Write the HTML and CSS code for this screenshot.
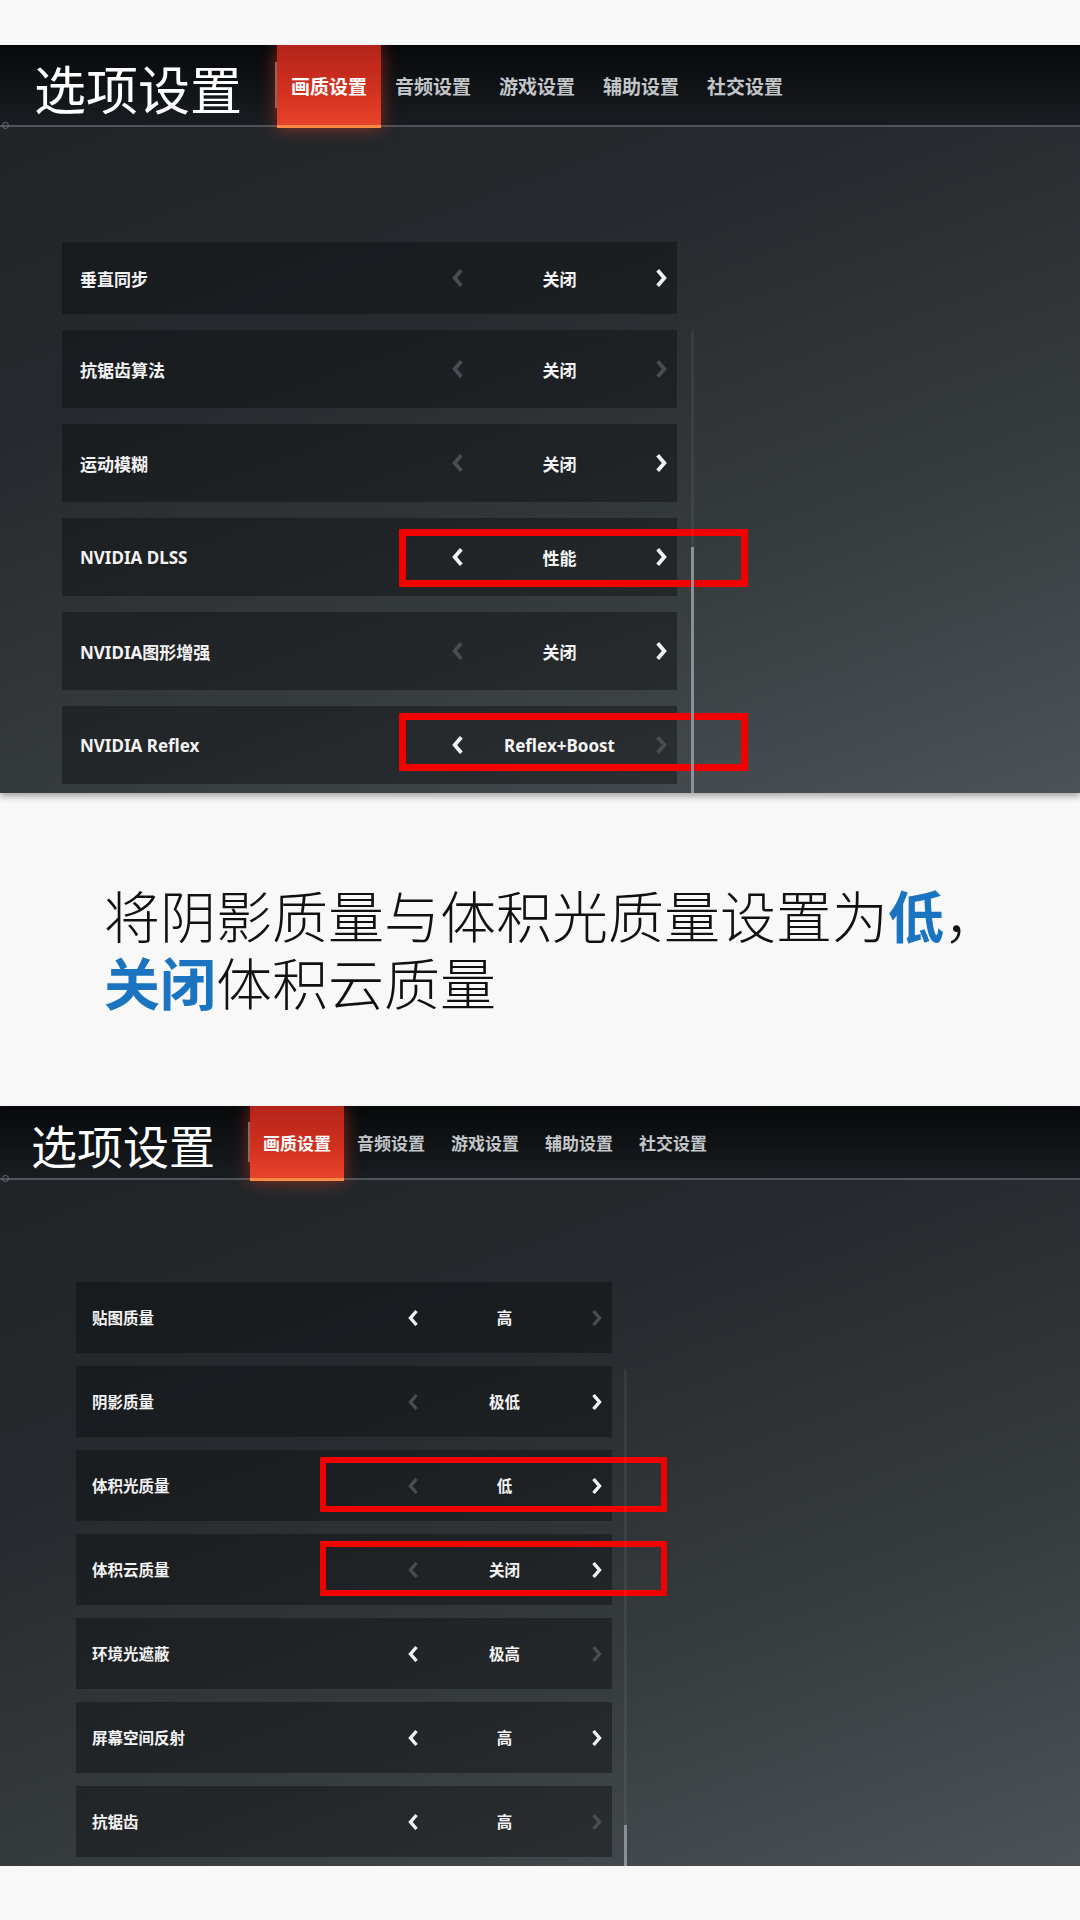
FILE: index.html
```html
<!DOCTYPE html>
<html lang="zh-CN">
<head>
<meta charset="utf-8">
<title>选项设置</title>
<link rel="stylesheet" href="styles.css">
</head>
<body>

<div class="shot shot-a">
    <div class="topbar">
        <div class="title">选项设置</div>
        <div class="divider"></div>
        <div class="tabs">
            <div class="tab active">画质设置</div>
            <div class="tab">音频设置</div>
            <div class="tab">游戏设置</div>
            <div class="tab">辅助设置</div>
            <div class="tab">社交设置</div>
        </div>
    </div>
    <div class="rule"></div>
    <div class="panel">
        <div class="list">
            <div class="row">
                <div class="label">垂直同步</div>
                <div class="picker">
                    <span class="chev off"><svg viewBox="0 0 12 18"><path d="M9 2 L3 9 L9 16"/></svg></span>
                    <span class="value">关闭</span>
                    <span class="chev"><svg viewBox="0 0 12 18"><path d="M3 2 L9 9 L3 16"/></svg></span>
                </div>
            </div>
            <div class="row">
                <div class="label">抗锯齿算法</div>
                <div class="picker">
                    <span class="chev off"><svg viewBox="0 0 12 18"><path d="M9 2 L3 9 L9 16"/></svg></span>
                    <span class="value">关闭</span>
                    <span class="chev off"><svg viewBox="0 0 12 18"><path d="M3 2 L9 9 L3 16"/></svg></span>
                </div>
            </div>
            <div class="row">
                <div class="label">运动模糊</div>
                <div class="picker">
                    <span class="chev off"><svg viewBox="0 0 12 18"><path d="M9 2 L3 9 L9 16"/></svg></span>
                    <span class="value">关闭</span>
                    <span class="chev"><svg viewBox="0 0 12 18"><path d="M3 2 L9 9 L3 16"/></svg></span>
                </div>
            </div>
            <div class="row">
                <div class="label">NVIDIA DLSS</div>
                <div class="picker">
                    <span class="chev"><svg viewBox="0 0 12 18"><path d="M9 2 L3 9 L9 16"/></svg></span>
                    <span class="value">性能</span>
                    <span class="chev"><svg viewBox="0 0 12 18"><path d="M3 2 L9 9 L3 16"/></svg></span>
                </div>
                <div class="mark"></div>
            </div>
            <div class="row">
                <div class="label">NVIDIA图形增强</div>
                <div class="picker">
                    <span class="chev off"><svg viewBox="0 0 12 18"><path d="M9 2 L3 9 L9 16"/></svg></span>
                    <span class="value">关闭</span>
                    <span class="chev"><svg viewBox="0 0 12 18"><path d="M3 2 L9 9 L3 16"/></svg></span>
                </div>
            </div>
            <div class="row">
                <div class="label">NVIDIA Reflex</div>
                <div class="picker">
                    <span class="chev"><svg viewBox="0 0 12 18"><path d="M9 2 L3 9 L9 16"/></svg></span>
                    <span class="value">Reflex+Boost</span>
                    <span class="chev off"><svg viewBox="0 0 12 18"><path d="M3 2 L9 9 L3 16"/></svg></span>
                </div>
                <div class="mark mark-low"></div>
            </div>
        </div>
        <div class="scroll"><div class="thumb"></div></div>
    </div>
</div>

<p class="caption">将阴影质量与体积光质量设置为<b>低</b>，<br><b>关闭</b>体积云质量</p>

<div class="shot shot-b">
    <div class="topbar">
        <div class="title">选项设置</div>
        <div class="divider"></div>
        <div class="tabs">
            <div class="tab active">画质设置</div>
            <div class="tab">音频设置</div>
            <div class="tab">游戏设置</div>
            <div class="tab">辅助设置</div>
            <div class="tab">社交设置</div>
        </div>
    </div>
    <div class="rule"></div>
    <div class="panel">
        <div class="list">
            <div class="row">
                <div class="label">贴图质量</div>
                <div class="picker">
                    <span class="chev"><svg viewBox="0 0 12 18"><path d="M9 2 L3 9 L9 16"/></svg></span>
                    <span class="value">高</span>
                    <span class="chev off"><svg viewBox="0 0 12 18"><path d="M3 2 L9 9 L3 16"/></svg></span>
                </div>
            </div>
            <div class="row">
                <div class="label">阴影质量</div>
                <div class="picker">
                    <span class="chev off"><svg viewBox="0 0 12 18"><path d="M9 2 L3 9 L9 16"/></svg></span>
                    <span class="value">极低</span>
                    <span class="chev"><svg viewBox="0 0 12 18"><path d="M3 2 L9 9 L3 16"/></svg></span>
                </div>
            </div>
            <div class="row">
                <div class="label">体积光质量</div>
                <div class="picker">
                    <span class="chev off"><svg viewBox="0 0 12 18"><path d="M9 2 L3 9 L9 16"/></svg></span>
                    <span class="value">低</span>
                    <span class="chev"><svg viewBox="0 0 12 18"><path d="M3 2 L9 9 L3 16"/></svg></span>
                </div>
                <div class="mark"></div>
            </div>
            <div class="row">
                <div class="label">体积云质量</div>
                <div class="picker">
                    <span class="chev off"><svg viewBox="0 0 12 18"><path d="M9 2 L3 9 L9 16"/></svg></span>
                    <span class="value">关闭</span>
                    <span class="chev"><svg viewBox="0 0 12 18"><path d="M3 2 L9 9 L3 16"/></svg></span>
                </div>
                <div class="mark"></div>
            </div>
            <div class="row">
                <div class="label">环境光遮蔽</div>
                <div class="picker">
                    <span class="chev"><svg viewBox="0 0 12 18"><path d="M9 2 L3 9 L9 16"/></svg></span>
                    <span class="value">极高</span>
                    <span class="chev off"><svg viewBox="0 0 12 18"><path d="M3 2 L9 9 L3 16"/></svg></span>
                </div>
            </div>
            <div class="row">
                <div class="label">屏幕空间反射</div>
                <div class="picker">
                    <span class="chev"><svg viewBox="0 0 12 18"><path d="M9 2 L3 9 L9 16"/></svg></span>
                    <span class="value">高</span>
                    <span class="chev"><svg viewBox="0 0 12 18"><path d="M3 2 L9 9 L3 16"/></svg></span>
                </div>
            </div>
            <div class="row">
                <div class="label">抗锯齿</div>
                <div class="picker">
                    <span class="chev"><svg viewBox="0 0 12 18"><path d="M9 2 L3 9 L9 16"/></svg></span>
                    <span class="value">高</span>
                    <span class="chev off"><svg viewBox="0 0 12 18"><path d="M3 2 L9 9 L3 16"/></svg></span>
                </div>
            </div>
        </div>
        <div class="scroll"><div class="thumb"></div></div>
    </div>
</div>

</body>
</html>
```

FILE: styles.css
```css
body {
    background-color: #f8f8f8;
    font-family: "Noto Sans", "Noto Sans CJK SC", sans-serif;
    color: #fff;
    margin: 0;
    padding: 45px 0 0 0;
}

/* game window captures */
.shot {
    position: relative;
    overflow: hidden;
    background: linear-gradient(160deg, #1f2326 0%, #262a2e 35%, #363b3e 68%, #4c5256 100%);
    box-shadow: 0 4px 6px rgba(0, 0, 0, 0.3);
}
.shot-a {
    height: 748px;
}
.shot-b {
    height: 760px;
    margin-top: 87px;
}

.topbar {
    display: flex;
    align-items: center;
    background: linear-gradient(to bottom, #07090b, #191d21);
}
.shot-a .topbar {
    height: 80px;
    padding-left: 34px;
}
.shot-b .topbar {
    height: 72px;
    padding-left: 31px;
}

.title {
    font-family: "Noto Sans CJK SC", sans-serif;
    color: #fff;
    line-height: 1;
}
.shot-a .title {
    font-size: 52px;
    width: 208px;
    margin: 6px 33px 0 0;
}
.shot-b .title {
    font-size: 46px;
    width: 184px;
    margin: 4px 33px 0 0;
}

.divider {
    width: 2px;
    background-color: #6f757a;
}
.shot-a .divider {
    height: 46px;
}
.shot-b .divider {
    height: 40px;
}

.tabs {
    display: flex;
    align-self: stretch;
}
.tab {
    display: flex;
    align-items: center;
    justify-content: center;
    color: #c3c6c9;
    font-family: "Noto Sans CJK SC", sans-serif;
    font-weight: bold;
}
.shot-a .tab {
    width: 104px;
    font-size: 19px;
}
.shot-b .tab {
    width: 94px;
    font-size: 17px;
}
.tab.active {
    position: relative;
    z-index: 1;
    color: #fff;
    margin-bottom: -3px;
    background: linear-gradient(to bottom, #b3241a 0%, #d1301f 55%, #e8432b 100%);
    border-bottom: 3px solid #ff8a45;
    box-shadow: 0 0 16px rgba(235, 60, 35, 0.55);
}

.rule {
    position: relative;
    height: 2px;
    background-color: #4f555a;
}
.rule::before {
    content: "";
    position: absolute;
    left: 2px;
    top: -3px;
    width: 7px;
    height: 7px;
    border-radius: 50%;
    border: 1px solid #6a7075;
    box-sizing: border-box;
}

.panel {
    display: flex;
    align-items: flex-start;
}
.shot-a .panel {
    padding: 115px 0 0 62px;
}
.shot-b .panel {
    padding: 102px 0 0 76px;
}

.list {
    display: flex;
    flex-direction: column;
}
.shot-a .list {
    width: 615px;
    gap: 16px;
}
.shot-b .list {
    width: 536px;
    gap: 13px;
}

.row {
    position: relative;
    display: flex;
    align-items: center;
    justify-content: space-between;
    background-color: rgba(10, 12, 14, 0.42);
}
.shot-a .row {
    height: 78px;
    padding: 0 4px 0 18px;
}
.shot-a .row:first-child {
    height: 72px;
}
.shot-b .row {
    height: 71px;
    padding: 0 4px 0 16px;
}

.label {
    font-weight: bold;
    color: #f2f2f2;
}
.shot-a .label {
    font-size: 17px;
}
.shot-b .label {
    font-size: 15.5px;
}

.picker {
    display: grid;
    grid-template-columns: 24px 1fr 24px;
    align-items: center;
}
.shot-a .picker {
    width: 227px;
}
.shot-b .picker {
    width: 207px;
}

.value {
    text-align: center;
    font-weight: bold;
    color: #f4f4f4;
}
.shot-a .value {
    font-size: 17px;
}
.shot-b .value {
    font-size: 15.5px;
}

.chev {
    display: flex;
    justify-content: center;
    color: #f2f2f2;
}
.chev.off {
    color: #474d51;
}
.chev svg {
    fill: none;
    stroke: currentColor;
    stroke-width: 3.4;
}
.shot-a .chev svg {
    width: 14px;
    height: 20px;
}
.shot-b .chev svg {
    width: 13px;
    height: 18px;
}

/* red callout boxes */
.mark {
    position: absolute;
    border: 7px solid #f20000;
    box-sizing: border-box;
}
.shot-a .mark {
    left: 337px;
    top: 11px;
    width: 349px;
    height: 58px;
}
.shot-a .mark-low {
    top: 7px;
}
.shot-b .mark {
    border-width: 6px;
    left: 244px;
    top: 7px;
    width: 347px;
    height: 55px;
}

.scroll {
    position: relative;
    width: 3px;
    background-color: rgba(255, 255, 255, 0.06);
}
.shot-a .scroll {
    height: 462px;
    margin: 89px 0 0 14px;
}
.shot-b .scroll {
    height: 497px;
    margin: 87px 0 0 12px;
}
.thumb {
    position: absolute;
    left: 0;
    right: 0;
    bottom: 0;
    background-color: #8a9096;
}
.shot-a .thumb {
    top: 216px;
}
.shot-b .thumb {
    top: 456px;
}

.caption {
    margin: 92px 0 0 0;
    padding-left: 104px;
    font-family: "Liberation Sans", "Noto Sans CJK SC", sans-serif;
    font-weight: 300;
    font-size: 56px;
    line-height: 67px;
    color: #111;
}
.caption b {
    color: #1b74c0;
    font-weight: bold;
}
```
